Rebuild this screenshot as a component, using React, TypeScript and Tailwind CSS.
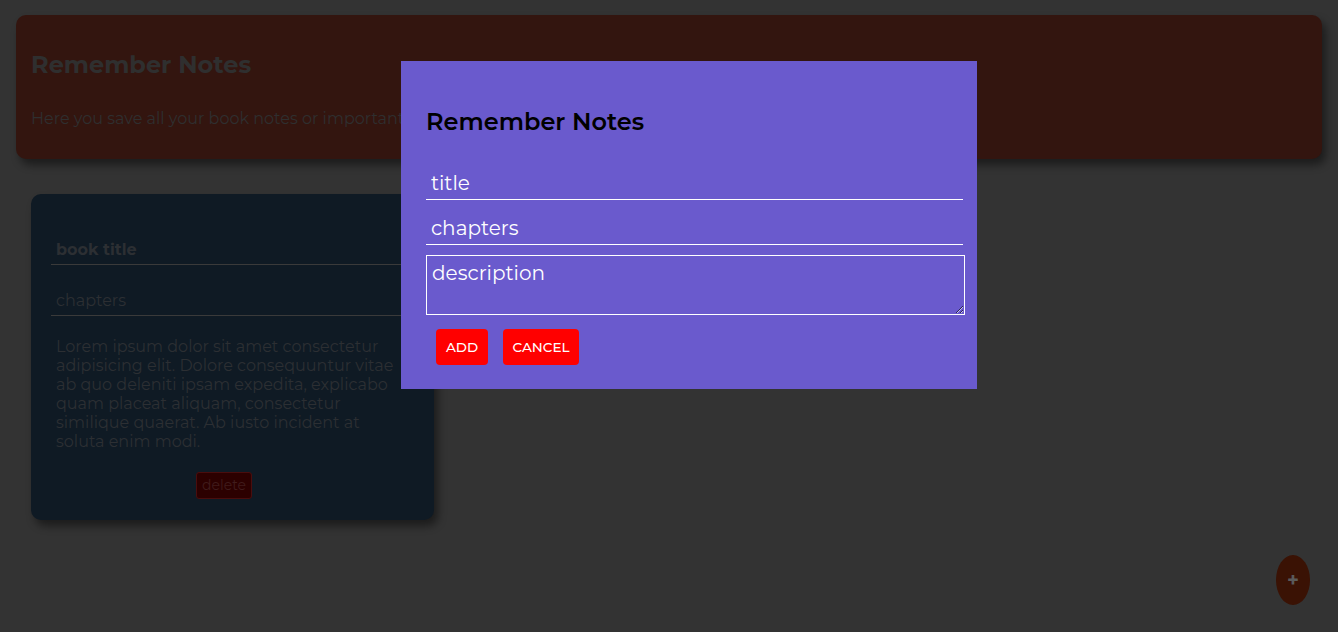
import React from "react";

const font = "font-['Montserrat','DejaVu_Sans',sans-serif]";

const NoteCard = () => {
  return (
    <div className="ml-[31px] mt-[35px] w-[403px] rounded-[10px] bg-[#0f1a24] px-[20px] pb-[21px] pt-[41px] shadow-[4px_6px_8px_rgba(0,0,0,0.45)]">
      <input
        readOnly
        value="book title"
        className="block h-[30px] w-full border-b border-[#3a3a3a] bg-transparent px-[5px] text-[16px] font-bold text-[#2c2f33] outline-none"
      />
      <input
        readOnly
        value="chapters"
        className="mt-[21px] block h-[30px] w-full border-b border-[#3a3a3a] bg-transparent px-[5px] text-[16px] text-[#2c2f33] outline-none"
      />
      <p className="mt-[21px] px-[5px] text-[16px] leading-[19px] text-[#2c2f33]">
        Lorem ipsum dolor sit amet consectetur adipisicing elit. Dolore
        consequuntur vitae ab quo deleniti ipsam expedita, explicabo quam
        placeat aliquam, consectetur similique quaerat. Ab iusto incident at
        soluta enim modi.
      </p>
      <div className="mt-[21px] flex pl-[145px]">
        <button className="h-[27px] rounded-[3px] border border-[#4a0d0d] bg-[#2c0000] px-[5px] text-[14px] text-[#401c1c]">
          delete
        </button>
      </div>
    </div>
  );
};

const Modal = () => {
  return (
    <div className="absolute left-[401px] top-[61px] w-[576px] bg-[#6a5acd] px-[25px] pb-[24px] pt-[46px]">
      <h2 className="text-[24px] font-semibold leading-[30px] text-black">
        Remember Notes
      </h2>
      <input
        placeholder="title"
        className="mt-[29px] block h-[34px] w-[537px] border-b border-white bg-transparent px-[5px] text-[20px] text-white outline-none placeholder:text-white"
      />
      <input
        placeholder="chapters"
        className="mt-[11px] block h-[34px] w-[537px] border-b border-white bg-transparent px-[5px] text-[20px] text-white outline-none placeholder:text-white"
      />
      <textarea
        placeholder="description"
        className="mt-[10px] block h-[60px] w-[539px] border border-white bg-transparent px-[5px] pt-[4px] text-[20px] leading-[26px] text-white outline-none placeholder:text-white"
      />
      <div className="mt-[14px] flex gap-[15px] pl-[10px]">
        <button className="h-[36px] w-[52px] rounded-[4px] bg-[#ff0000] text-[13.5px] font-medium text-white">
          ADD
        </button>
        <button className="h-[36px] w-[76px] rounded-[4px] bg-[#ff0000] text-[13.5px] font-medium text-white">
          CANCEL
        </button>
      </div>
    </div>
  );
};

export default function App() {
  return (
    <div className={`relative min-h-[632px] bg-[#333333] pt-[15px] ${font}`}>
      <header className="mx-[16px] rounded-[10px] bg-[#33150f] px-[15px] pb-[30px] pt-[35px] shadow-[4px_6px_8px_rgba(0,0,0,0.45)]">
        <h1 className="text-[24px] font-bold leading-[29px] text-[#2f2f2f]">
          Remember Notes
        </h1>
        <p className="mt-[30px] text-[16px] leading-[20px] text-[#2f2f2f]">
          Here you save all your book notes or important things
        </p>
      </header>

      <NoteCard />

      <button className="absolute bottom-[27px] right-[28px] flex h-[50px] w-[34px] items-center justify-center rounded-[50%] bg-[#3a1204] text-[20px] font-bold text-[#5a5a5a]">
        +
      </button>

      <Modal />
    </div>
  );
}
